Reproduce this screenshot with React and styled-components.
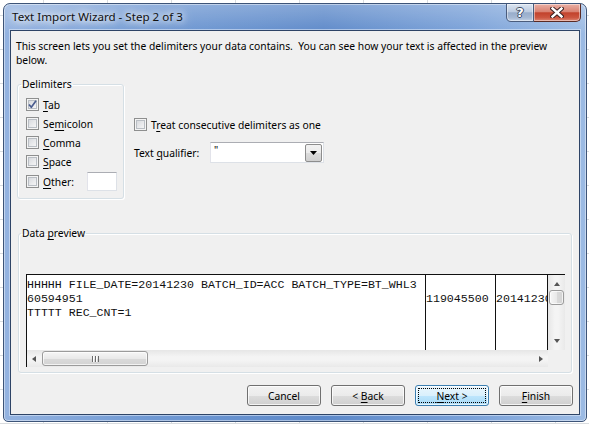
import React from 'react';
import styled, { createGlobalStyle } from 'styled-components';

const Global = createGlobalStyle`
  html, body { margin: 0; padding: 0; }
  body {
    width: 589px;
    height: 424px;
    overflow: hidden;
    background-color: #fff;
    background-image:
      linear-gradient(90deg, #d9dcdf 1px, transparent 1px),
      linear-gradient(#d9dcdf 1px, transparent 1px);
    background-size: 64px 34px;
    background-position: 43px 15px;
    font-family: "Noto Sans", "Open Sans", sans-serif;
    font-size: 10.3px;
    color: #000;
  }
  #root { width: 589px; height: 424px; }
`;

const Win = styled.div`
  margin: 3px 0 0 3px;
  width: 584px;
  height: 419px;
  box-sizing: border-box;
  border: 1px solid #3d5478;
  border-radius: 7px 7px 5px 5px;
  background:
    linear-gradient(rgba(255,255,255,0.25), rgba(255,255,255,0) 30px),
    linear-gradient(90deg, #94b3e0 0%, #7099d3 25%, #5d89c9 55%, #7aa1d8 80%, #9cbbe4 100%);
  box-shadow: inset 0 0 0 1px rgba(255,255,255,0.45);
  display: flex;
  flex-direction: column;
  overflow: hidden;
`;

const TitleBar = styled.div`
  height: 26px;
  display: flex;
  align-items: flex-start;
  flex: none;
`;

const Title = styled.div`
  padding-left: 8px;
  line-height: 26px;
  font-size: 11.6px;
  color: #111;
  text-shadow: 0 0 6px #fff, 0 0 10px #fff, 0 0 14px rgba(255,255,255,0.9);
  white-space: nowrap;
`;

const Captions = styled.div`
  margin-left: auto;
  margin-right: 5px;
  display: flex;
`;

const CapBtn = styled.div`
  height: 18px;
  box-sizing: border-box;
  display: flex;
  align-items: center;
  justify-content: center;
  border: 1px solid ${p => (p.$close ? '#5a2a24' : '#4a5c7c')};
  border-top: none;
  width: ${p => (p.$close ? '47px' : '28px')};
  border-radius: ${p => (p.$close ? '0 0 5px 0' : '0 0 0 5px')};
  border-left: ${p => (p.$close ? 'none' : undefined)};
  background: ${p =>
    p.$close
      ? 'linear-gradient(#eab0a5 0%, #d98272 45%, #c2422c 52%, #cc5640 80%, #dd8672 100%)'
      : 'linear-gradient(#dce5f1 0%, #bccbe0 45%, #98adcb 52%, #a5b8d3 80%, #c3d2e6 100%)'};
  box-shadow: inset 0 0 0 1px rgba(255,255,255,0.45);
`;

const Help = styled.span`
  font-family: "DejaVu Sans", sans-serif;
  font-weight: 700;
  font-size: 13px;
  line-height: 13px;
  color: #fff;
  text-shadow: 1px 0 0 #3b4a63, -1px 0 0 #3b4a63, 0 1px 0 #3b4a63, 0 -1px 0 #3b4a63;
`;

const Client = styled.div`
  flex: 1;
  margin: 0 6px 6px 6px;
  border: 1px solid #2e4466;
  box-shadow: 0 0 0 1px rgba(220,232,248,0.6);
  background: #f0f0f0;
  display: flex;
  flex-direction: column;
  min-height: 0;
`;

const Intro = styled.div`
  padding: 8px 0 0 5px;
  line-height: 14px;
  white-space: nowrap;
`;

const MidRow = styled.div`
  display: flex;
  align-items: flex-start;
  gap: 10px;
  margin-top: ${p => p.$mt || 10}px;
  padding-left: ${p => p.$pl || 6}px;
`;

const Group = styled.fieldset`
  margin: 0;
  box-sizing: border-box;
  width: ${p => p.$w}px;
  height: ${p => p.$h}px;
  border: 1px solid #d5dfe5;
  border-radius: 3px;
  box-shadow: inset 1px 1px 0 #fff, 1px 1px 0 #fff;
  padding: ${p => p.$pad};
  min-width: 0;
`;

const Legend = styled.legend`
  margin-left: -5px;
  padding: 0 1px;
  line-height: 14px;
`;

const CheckRow = styled.div`
  display: flex;
  align-items: center;
  height: ${p => p.$h || 19}px;
  gap: 4px;
`;

const Box = styled.span`
  width: 13px;
  height: 13px;
  box-sizing: border-box;
  border: 1px solid #8e8f8f;
  background: linear-gradient(135deg, #cfd2d7 0%, #e9eaec 55%, #fbfbfb 100%);
  box-shadow: inset 0 0 0 1px #f4f4f4, inset 0 0 0 2px #b9bec4;
  display: flex;
  align-items: center;
  justify-content: center;
  flex: none;
`;

const U = styled.span`
  text-decoration: underline;
  text-underline-offset: 2px;
`;

const SmallInput = styled.span`
  width: ${p => p.$w}px;
  height: ${p => p.$h}px;
  box-sizing: border-box;
  background: #fff;
  border: 1px solid #dde1e7;
  border-top-color: #abadb3;
  border-left-color: #e2e3ea;
  display: flex;
  align-items: flex-start;
  flex: none;
`;

const Label = styled.span`
  width: ${p => p.$w}px;
  flex: none;
  white-space: nowrap;
`;

const Options = styled.div`
  padding-top: 38px;
  display: flex;
  flex-direction: column;
  gap: 8px;
`;

const QualRow = styled.div`
  display: flex;
  align-items: center;
  height: 21px;
`;

const ComboValue = styled.span`
  padding: 1px 0 0 3px;
  line-height: 12px;
  flex: 1;
`;

const DropBtn = styled.span`
  width: 17px;
  height: 18px;
  margin: 1px 1px 0 0;
  box-sizing: border-box;
  border: 1px solid #8d8d8d;
  border-radius: 2px;
  background: linear-gradient(#f2f2f2 0%, #ebebeb 50%, #dcdcdc 51%, #cfcfcf 100%);
  display: flex;
  align-items: center;
  justify-content: center;
`;

const Preview = styled.div`
  margin-top: 34px;
  display: grid;
  grid-template-columns: 1fr 17px;
  grid-template-rows: 1fr 17px;
  height: 93px;
  box-sizing: border-box;
  border-left: 1px solid #111;
  border-top: 1px solid #111;
  background: #f0f0f0;
`;

const Sheet = styled.div`
  background: #fff;
  border-right: 1px solid #111;
  display: flex;
  overflow: hidden;
  font-family: "Liberation Mono", "Courier New", monospace;
  font-size: 11.6px;
  line-height: 14px;
  color: #111;
`;

const Col = styled.div`
  width: ${p => (p.$w ? p.$w + 'px' : 'auto')};
  flex: ${p => (p.$w ? 'none' : '1')};
  box-sizing: border-box;
  border-right: ${p => (p.$last ? 'none' : '1px solid #111')};
  padding: 3px 0 0 0;
  white-space: pre;
  overflow: hidden;
`;

const VScroll = styled.div`
  background: linear-gradient(90deg, #e6e6e6, #f4f4f4 40%, #f4f4f4 60%, #e9e9e9);
  display: flex;
  flex-direction: column;
  align-items: center;
`;

const HScroll = styled.div`
  background: linear-gradient(#e6e6e6, #f4f4f4 40%, #f4f4f4 60%, #e9e9e9);
  display: flex;
  align-items: center;
`;

const Arrow = styled.span`
  width: 0;
  height: 0;
  flex: none;
  ${p => p.$dir === 'left' && `border-top: 3.5px solid transparent; border-bottom: 3.5px solid transparent; border-right: 4px solid #555; margin-left: 5px;`}
  ${p => p.$dir === 'right' && `border-top: 3.5px solid transparent; border-bottom: 3.5px solid transparent; border-left: 4px solid #555; margin-left: auto; margin-right: 5px;`}
  ${p => p.$dir === 'up' && `border-left: 3.5px solid transparent; border-right: 3.5px solid transparent; border-bottom: 4px solid #555; margin-top: 7px;`}
  ${p => p.$dir === 'down' && `border-left: 3.5px solid transparent; border-right: 3.5px solid transparent; border-top: 4px solid #555; margin-top: auto; margin-bottom: 7px;`}
`;

const Thumb = styled.span`
  box-sizing: border-box;
  border: 1px solid #9b9b9b;
  border-radius: 3px;
  flex: none;
  display: flex;
  align-items: center;
  justify-content: center;
  ${p =>
    p.$v
      ? `width: 15px; height: 15px; margin-top: 4px; background: linear-gradient(90deg, #f6f6f6, #e9e9e9 50%, #dadada 51%, #d3d3d3);`
      : `height: 15px; width: 106px; margin-left: 6px; background: linear-gradient(#f6f6f6, #e9e9e9 50%, #dadada 51%, #d3d3d3);`}
  box-shadow: inset 0 0 0 1px rgba(255,255,255,0.7);
`;

const Grip = styled.span`
  width: 7px;
  height: 6px;
  background: repeating-linear-gradient(90deg, #6b6b6b 0 1px, #fff 1px 2px, transparent 2px 3px);
`;

const Corner = styled.div`
  background: #f0f0f0;
`;

const Buttons = styled.div`
  display: flex;
  justify-content: flex-end;
  gap: 10px;
  margin-top: 12px;
  padding-right: 6px;
`;

const Btn = styled.div`
  width: 74px;
  height: 21px;
  box-sizing: border-box;
  border: 1px solid ${p => (p.$def ? '#3c7fb1' : '#707070')};
  border-radius: 3px;
  background: ${p =>
    p.$def
      ? 'linear-gradient(#eaf6fd 0%, #d9f0fc 50%, #bee6fd 51%, #a7d9f5 100%)'
      : 'linear-gradient(#f2f2f2 0%, #ebebeb 50%, #dddddd 51%, #cfcfcf 100%)'};
  box-shadow: inset 0 0 0 1px rgba(255,255,255,0.75);
  display: flex;
  align-items: center;
  justify-content: center;
  position: relative;
  line-height: 14px;
  &::after {
    content: '';
    display: ${p => (p.$def ? 'block' : 'none')};
    position: absolute;
    inset: 2px;
    border: 1px dotted #000;
  }
`;

const Check = () => (
  <svg width="9" height="9" viewBox="0 0 9 9">
    <path d="M1 4.5 L3.3 7.3 L8 0.8" fill="none" stroke="#4a5d8f" strokeWidth="1.7" strokeLinejoin="round" />
  </svg>
);

const CloseX = () => (
  <svg width="14" height="11" viewBox="0 0 14 11">
    <path d="M2.5 1.5 L11.5 9.5 M11.5 1.5 L2.5 9.5" stroke="#3a2020" strokeWidth="4.4" strokeLinecap="square" />
    <path d="M2.5 1.5 L11.5 9.5 M11.5 1.5 L2.5 9.5" stroke="#fff" strokeWidth="2.4" strokeLinecap="square" />
  </svg>
);

const DropTri = () => (
  <svg width="7" height="4" viewBox="0 0 7 4">
    <path d="M0 0 H7 L3.5 4 Z" fill="#000" />
  </svg>
);

const delims = [
  ['', 'T', 'ab', true],
  ['Se', 'm', 'icolon', false],
  ['', 'C', 'omma', false],
  ['', 'S', 'pace', false],
];

export default function App() {
  return (
    <>
      <Global />
      <Win>
        <TitleBar>
          <Title>Text Import Wizard - Step 2 of 3</Title>
          <Captions>
            <CapBtn><Help>?</Help></CapBtn>
            <CapBtn $close><CloseX /></CapBtn>
          </Captions>
        </TitleBar>
        <Client>
          <Intro>
            This screen lets you set the delimiters your data contains.&nbsp; You can see how your text is affected in the preview
            <br />
            below.
          </Intro>
          <MidRow>
            <Group $w={107} $h={122} $pad="4px 4px 4px 8px">
              <Legend>Delimiters</Legend>
              {delims.map(([a, u, b, checked], i) => (
                <CheckRow key={i}>
                  <Box>{checked && <Check />}</Box>
                  <span>
                    {a}
                    <U>{u}</U>
                    {b}
                  </span>
                </CheckRow>
              ))}
              <CheckRow $h={21}>
                <Box />
                <Label $w={40}>
                  <U>O</U>ther:
                </Label>
                <SmallInput $w={30} $h={19} />
              </CheckRow>
            </Group>
            <Options>
              <CheckRow>
                <Box />
                <span>
                  T<U>r</U>eat consecutive delimiters as one
                </span>
              </CheckRow>
              <QualRow>
                <Label $w={76}>
                  Text <U>q</U>ualifier:
                </Label>
                <SmallInput $w={114} $h={21}>
                  <ComboValue>"</ComboValue>
                  <DropBtn>
                    <DropTri />
                  </DropBtn>
                </SmallInput>
              </QualRow>
            </Options>
          </MidRow>
          <MidRow $mt={27} $pl={7}>
            <Group $w={554} $h={147} $pad="0 6px 5px 7px">
              <Legend>
                Data <U>p</U>review
              </Legend>
              <Preview>
                <Sheet>
                  <Col $w={399}>
                    {'HHHHH FILE_DATE=20141230 BATCH_ID=ACC BATCH_TYPE=BT_WHL3\n60594951\nTTTTT REC_CNT=1'}
                  </Col>
                  <Col $w={70}>{'\n119045500'}</Col>
                  <Col $last>{'\n20141230'}</Col>
                </Sheet>
                <VScroll>
                  <Arrow $dir="up" />
                  <Thumb $v />
                  <Arrow $dir="down" />
                </VScroll>
                <HScroll>
                  <Arrow $dir="left" />
                  <Thumb>
                    <Grip />
                  </Thumb>
                  <Arrow $dir="right" />
                </HScroll>
                <Corner />
              </Preview>
            </Group>
          </MidRow>
          <Buttons>
            <Btn>Cancel</Btn>
            <Btn>
              <span>
                &lt; <U>B</U>ack
              </span>
            </Btn>
            <Btn $def>
              <span>
                <U>N</U>ext &gt;
              </span>
            </Btn>
            <Btn>
              <span>
                <U>F</U>inish
              </span>
            </Btn>
          </Buttons>
        </Client>
      </Win>
    </>
  );
}
